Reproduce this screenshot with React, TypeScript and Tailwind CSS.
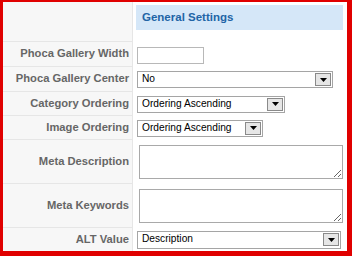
import React from "react";

const Arrow = () => (
  <div className="w-[16px] h-[13px] border border-[#8a8a8a] bg-[#e6e6e6] flex items-center justify-center shrink-0">
    <svg width="7" height="4" viewBox="0 0 7 4">
      <polygon points="0,0 7,0 3.5,4" fill="#000" />
    </svg>
  </div>
);

const Sel = ({ cls, text }: { cls: string; text: string }) => (
  <div className={`flex items-center justify-between bg-white border border-[#a5a5a5] pl-[4px] pr-[1px] ${cls}`}>
    <span className="text-[10.2px] text-black leading-none">{text}</span>
    <Arrow />
  </div>
);

const Key = ({ children, cls }: { children?: React.ReactNode; cls?: string }) => (
  <div
    className={`w-[130px] shrink-0 bg-[#f7f7f7] border-r border-b border-[#e6e6e6] flex items-center justify-end pr-[3px] text-[11.2px] font-bold text-[#666666] leading-none ${cls ?? ""}`}
  >
    {children}
  </div>
);

export default function App() {
  return (
    <div
      className="w-[352px] h-[256px] bg-[#e00000] pt-[2px] pl-[3px] pr-[5px] pb-[5px]"
      style={{ fontFamily: '"Liberation Sans", Arial, sans-serif' }}
    >
      <div className="w-[344px] h-[249px] bg-white flex flex-col overflow-hidden">
        {/* header */}
        <div className="flex h-[40px] shrink-0">
          <Key />
          <div className="pl-[3px] pt-[3px]">
            <div className="w-[207px] h-[25px] bg-[#d5e7f8] flex items-center pl-[6px] text-[11.5px] font-bold text-[#2164a6]">
              General Settings
            </div>
          </div>
        </div>
        <div className="flex h-[25px] shrink-0">
          <Key>Phoca Gallery Width</Key>
          <div className="flex items-center pl-[4px]">
            <div className="w-[67px] h-[17px] border border-[#b8b8b8] bg-white mt-[1px]" />
          </div>
        </div>
        <div className="flex h-[25px] shrink-0">
          <Key>Phoca Gallery Center</Key>
          <div className="flex items-center pl-[4px]">
            <Sel cls="w-[196px] h-[17px]" text="No" />
          </div>
        </div>
        <div className="flex h-[24px] shrink-0">
          <Key>Category Ordering</Key>
          <div className="flex items-center pl-[4px]">
            <Sel cls="w-[148px] h-[17px]" text="Ordering Ascending" />
          </div>
        </div>
        <div className="flex h-[24px] shrink-0">
          <Key>Image Ordering</Key>
          <div className="flex items-center pl-[4px]">
            <Sel cls="w-[126px] h-[17px]" text="Ordering Ascending" />
          </div>
        </div>
        <div className="flex h-[44px] shrink-0">
          <Key>Meta Description</Key>
          <div className="flex items-center pl-[6px]">
            <textarea className="w-[204px] h-[34px] border border-[#a9a9a9] bg-white block" />
          </div>
        </div>
        <div className="flex h-[44px] shrink-0">
          <Key>Meta Keywords</Key>
          <div className="flex items-center pl-[6px]">
            <textarea className="w-[204px] h-[34px] border border-[#a9a9a9] bg-white block" />
          </div>
        </div>
        <div className="flex h-[23px] shrink-0">
          <Key cls="border-b-0">ALT Value</Key>
          <div className="flex items-center pl-[4px]">
            <Sel cls="w-[204px] h-[18px]" text="Description" />
          </div>
        </div>
      </div>
    </div>
  );
}
